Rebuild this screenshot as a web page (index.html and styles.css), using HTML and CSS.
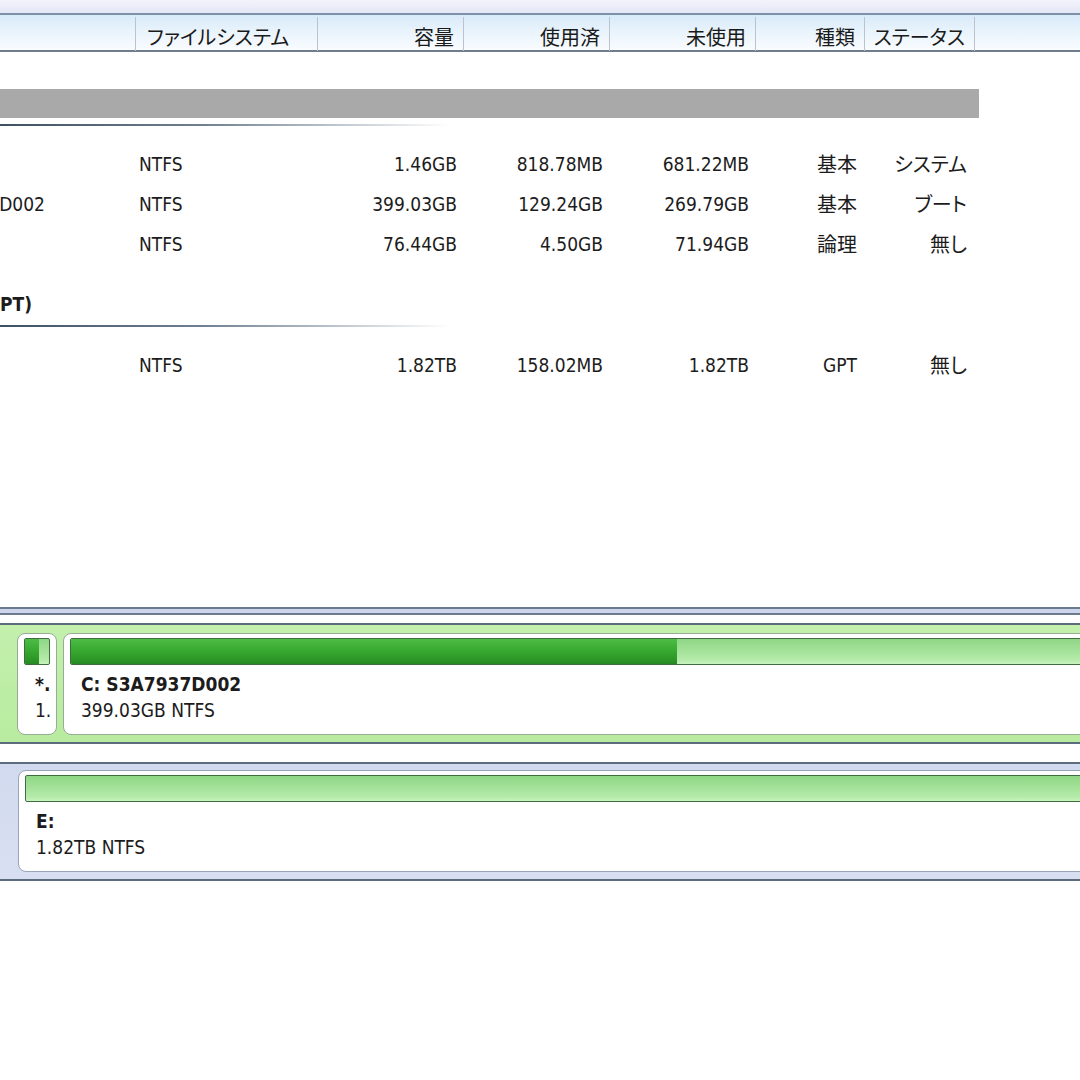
FILE: index.html
```html
<!DOCTYPE html>
<html lang="ja">
<head>
<meta charset="utf-8">
<title>Disk Manager</title>
<link rel="stylesheet" href="styles.css">
</head>
<body>
<div class="app">
  <div class="top-pane">
    <div class="strip"></div>
    <div class="head">
      <div class="hc hc-name"></div>
      <div class="hc hc-fs">ファイルシステム</div>
      <div class="hc">容量</div>
      <div class="hc">使用済</div>
      <div class="hc">未使用</div>
      <div class="hc">種類</div>
      <div class="hc">ステータス</div>
      <div class="hc hc-rest"></div>
    </div>
    <div class="list">
      <div class="grp grp-sel">
        <div class="grp-head"></div>
        <div class="grp-rule"></div>
      </div>
      <div class="rows">
        <div class="row">
          <div class="cell name"></div>
          <div class="cell fs">NTFS</div>
          <div class="cell num">1.46GB</div>
          <div class="cell num">818.78MB</div>
          <div class="cell num">681.22MB</div>
          <div class="cell type"><span class="jp">基本</span></div>
          <div class="cell status"><span class="jp">システム</span></div>
        </div>
        <div class="row">
          <div class="cell name"><div class="clip clip-d">C: S3A7937D002</div></div>
          <div class="cell fs">NTFS</div>
          <div class="cell num">399.03GB</div>
          <div class="cell num">129.24GB</div>
          <div class="cell num">269.79GB</div>
          <div class="cell type"><span class="jp">基本</span></div>
          <div class="cell status"><span class="jp">ブート</span></div>
        </div>
        <div class="row">
          <div class="cell name"></div>
          <div class="cell fs">NTFS</div>
          <div class="cell num">76.44GB</div>
          <div class="cell num">4.50GB</div>
          <div class="cell num">71.94GB</div>
          <div class="cell type"><span class="jp">論理</span></div>
          <div class="cell status"><span class="jp">無し</span></div>
        </div>
      </div>
      <div class="grp">
        <div class="grp-head"><div class="clip clip-g"><span class="jpb">ディスク</span> 2 (GPT)</div></div>
        <div class="grp-rule"></div>
      </div>
      <div class="rows">
        <div class="row">
          <div class="cell name"></div>
          <div class="cell fs">NTFS</div>
          <div class="cell num">1.82TB</div>
          <div class="cell num">158.02MB</div>
          <div class="cell num">1.82TB</div>
          <div class="cell type">GPT</div>
          <div class="cell status"><span class="jp">無し</span></div>
        </div>
      </div>
    </div>
  </div>
  <div class="splitter"></div>
  <div class="map">
    <div class="disk disk-green">
      <div class="card card-g card-sm">
        <div class="bar"><div class="fill" style="width:60%"></div></div>
        <div class="label"><b>*.</b><br>1.</div>
      </div>
      <div class="card card-g card-lg">
        <div class="bar"><div class="fill" style="width:32.4%"></div></div>
        <div class="label"><b>C: S3A7937D002</b><br>399.03GB NTFS</div>
      </div>
    </div>
    <div class="disk disk-blue">
      <div class="card card-b card-xl">
        <div class="bar"><div class="fill" style="width:0%"></div></div>
        <div class="label"><b>E:</b><br>1.82TB NTFS</div>
      </div>
    </div>
  </div>
</div>
</body>
</html>
```

FILE: styles.css
```css
html, body {
  margin: 0;
  padding: 0;
}
body {
  width: 1080px;
  height: 1080px;
  overflow: hidden;
  background: #ffffff;
  color: #1c1c1c;
  font-family: "DejaVu Sans Condensed", "DejaVu Sans", sans-serif;
  font-stretch: condensed;
  font-size: 19px;
}
.app {
  width: 1080px;
}
.top-pane {
  height: 609px;
  box-sizing: border-box;
  border-bottom: 2px solid #6b7a8c;
  overflow: hidden;
}
.strip {
  height: 13px;
  background: linear-gradient(#f2f3fb, #e4e8f6);
}
.head {
  display: grid;
  grid-template-columns: 136px 182px 146px 146px 146px 109px 110px 1fr;
  height: 35px;
  border-top: 2px solid #7f90a9;
  border-bottom: 2px solid #6f7c8b;
  background: linear-gradient(#d8eaf9, #eaf4fc 50%, #f9fcff);
}
.hc {
  display: flex;
  align-items: center;
  justify-content: flex-end;
  padding: 5px 9px 0 0;
  margin-top: 2px;
  border-right: 1px solid #bcc3cd;
  font-family: "Noto Sans CJK JP", sans-serif;
  font-size: 20px;
  font-feature-settings: "palt";
  color: #1a1a1a;
  white-space: nowrap;
}
.hc-fs {
  justify-content: flex-start;
  padding-left: 11px;
}
.hc-rest {
  border-right: none;
}
.list {
  padding-top: 11px;
}
.grp {
  padding-top: 26px;
}
.grp-head {
  height: 29px;
  line-height: 29px;
  font-weight: bold;
}
.grp-sel .grp-head {
  width: 979px;
  background: #a9a9a9;
}
.grp-rule {
  margin-top: 6px;
  width: 450px;
  height: 2px;
  background: linear-gradient(to right, #3e5163, #6f8091 45%, rgba(255, 255, 255, 0));
}
.rows {
  padding-top: 18px;
}
.row {
  display: grid;
  grid-template-columns: 136px 182px 146px 146px 146px 109px 110px 1fr;
  height: 40px;
  line-height: 40px;
}
.cell {
  white-space: nowrap;
  overflow: hidden;
}
.fs {
  padding-left: 3px;
}
.num {
  text-align: right;
  padding-right: 7px;
}
.type {
  text-align: right;
  padding-right: 8px;
}
.status {
  text-align: right;
  padding-right: 8px;
}
.jp {
  font-family: "Noto Sans CJK JP", sans-serif;
  font-size: 20px;
  font-feature-settings: "palt";
}
.jpb {
  font-family: "Noto Sans CJK JP", sans-serif;
  font-weight: bold;
}
.clip {
  display: flex;
  justify-content: flex-end;
  overflow: hidden;
  white-space: nowrap;
}
.clip-d {
  width: 45px;
}
.clip-g {
  width: 32px;
}
.splitter {
  height: 4px;
  background: #ccd5ec;
  border-bottom: 2px solid #6b7a8c;
}
.map {
  padding-top: 8px;
}
.disk {
  display: flex;
  border-top: 2px solid #5d6c7d;
  border-bottom: 2px solid #5d6c7d;
  padding: 8px 0 7px 17px;
  overflow: hidden;
}
.disk-green {
  background: linear-gradient(#c3f0ad, #b8eb9f);
}
.disk-blue {
  margin-top: 18px;
  padding: 6px 0 7px 18px;
  background: linear-gradient(#d2daef, #d8dff1);
}
.card {
  flex: none;
  box-sizing: border-box;
  height: 102px;
  padding: 4px 6px 0;
  background: #ffffff;
  border: 1px solid #97ab97;
  border-radius: 8px;
  overflow: hidden;
}
.card-b {
  border-color: #9aa5b9;
}
.card-sm {
  width: 40px;
}
.card-lg {
  width: 1885px;
  margin-left: 6px;
}
.card-xl {
  width: 1900px;
}
.bar {
  display: flex;
  height: 27px;
  box-sizing: border-box;
  border: 1px solid #3f6d40;
  border-radius: 2px;
  background: linear-gradient(#8fd686, #a3e198 45%, #b6ebab 85%, #c9f3bf);
  overflow: hidden;
}
.fill {
  height: 100%;
  background: linear-gradient(#4cbc44, #38aa31 45%, #2c9527 85%, #268a22);
}
.label {
  margin-top: 6px;
  padding-left: 11px;
  line-height: 26px;
  white-space: nowrap;
}
.label b {
  font-weight: bold;
}
```
